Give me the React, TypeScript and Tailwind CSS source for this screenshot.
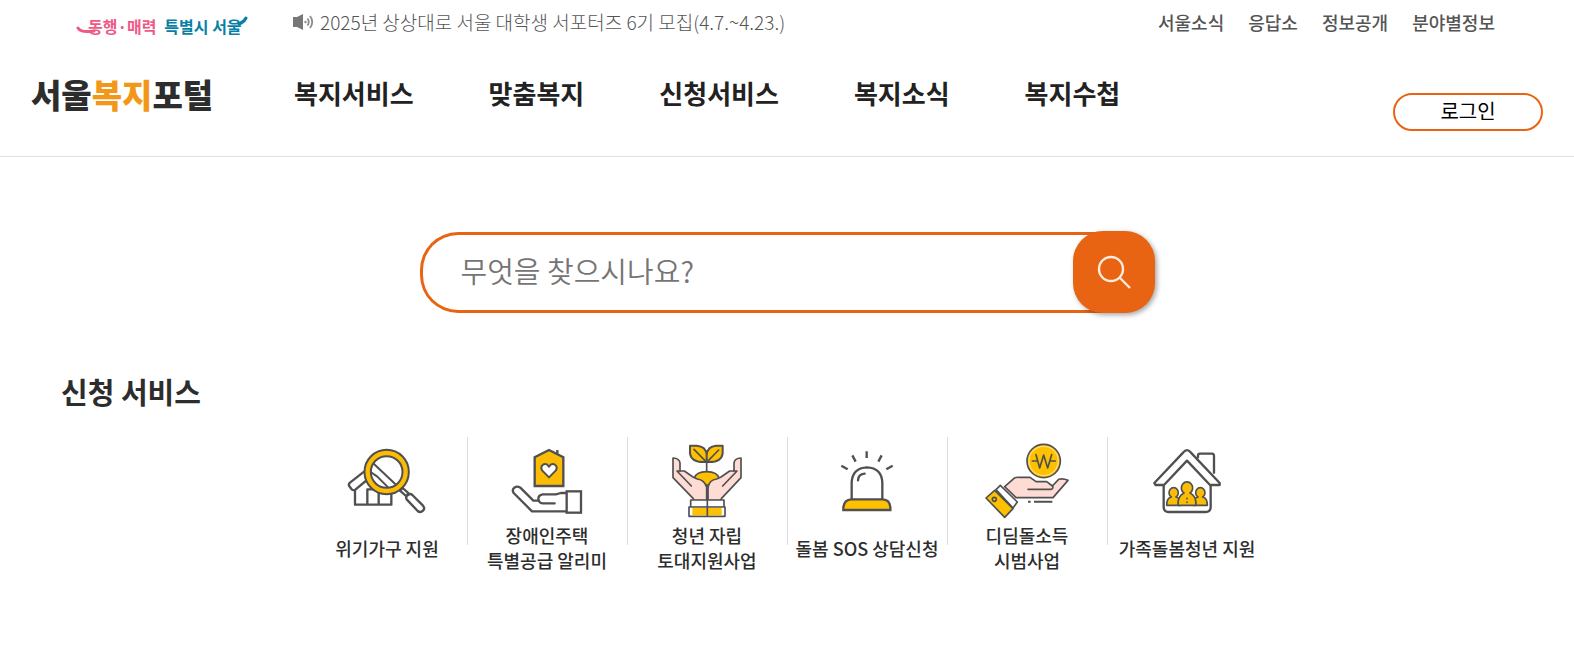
import type { ReactNode } from "react";

const utilityLinks = ["서울소식", "응답소", "정보공개", "분야별정보"];
const menuLinks = ["복지서비스", "맞춤복지", "신청서비스", "복지소식", "복지수첩"];

function Icon({ box, children }: { box: string; children: ReactNode }) {
  return (
    <svg
      viewBox={box}
      className="h-[88px] w-[100px]"
      fill="none"
      stroke="#505050"
      strokeWidth="7"
      strokeLinejoin="round"
      strokeLinecap="round"
      aria-hidden="true"
    >
      {children}
    </svg>
  );
}

function HouseSearchIcon() {
  return (
    <Icon box="51 21 300 264">
      <path d="M105 180V224H214V184M142 222V178H176V222" fill="#fff" />
      <path d="M136 122L90 158Q84 163 88 169L95 178Q101 183 107 178L148 144" fill="#fff" />
      <circle cx="200" cy="126" r="56" fill="#fff" strokeWidth="4" />
      <path d="M158 98L232 168M152 126L172 140L208 176" strokeWidth="6" />
      <circle cx="200" cy="126" r="57" strokeWidth="25" />
      <circle cx="200" cy="126" r="57" stroke="#fbbc05" strokeWidth="13" />
      <path d="M240 182L248 174L266 190L258 198Z" fill="#fff" />
      <path d="M260 208Q256 200 263 196Q270 189 277 195L309 227Q316 235 309 242Q301 250 293 243Z" fill="#fff" />
    </Icon>
  );
}

function HouseHandIcon() {
  return (
    <Icon box="531 21 300 264">
      <path d="M712 76V60" strokeLinecap="butt" />
      <path d="M644 168V82L687 60L730 82V168Z" fill="#fbbc05" strokeLinejoin="miter" />
      <path d="M687 142L667 122Q660 111 669 104Q680 98 687 110Q694 98 705 104Q714 111 707 122Z" fill="#fff" strokeWidth="6" />
      <path d="M738 189H722L708 193H668Q655 195 655 207Q656 219 668 220H704" />
      <path d="M738 244H636L581 189Q575 180 583 173Q592 167 601 173L640 212H656" />
      <rect x="740" y="184" width="43" height="64" strokeLinejoin="miter" fill="#fff" />
    </Icon>
  );
}

function SproutIcon() {
  return (
    <Icon box="111 21 300 264">
      <path d="M260 96V130" strokeWidth="5" />
      <path d="M259 96Q214 99 210 70V47H230Q258 49 260 74V96Q304 99 308 70V47H288Q263 49 260 74" fill="#ffc000" strokeWidth="6" />
      <path d="M258 95L222 58M262 95L296 60" strokeWidth="5" />
      <path d="M222 146Q228 125 260 125Q292 125 298 146L280 165H240Z" fill="#ffc000" strokeWidth="5" />
      <path d="M159 84V143L220 206V212H260V172Q254 150 232 147L219 141L193 123H180V99Q179 85 159 84Z" fill="#ffdbd5" strokeWidth="5" />
      <path d="M363 84V143L304 206V212H264V172Q268 150 290 147L303 141L329 123H342V99Q343 85 363 84Z" fill="#ffdbd5" strokeWidth="5" />
      <path d="M180 123H171L214 168M342 123H351L308 168" strokeWidth="5" />
      <rect x="212" y="210" width="100" height="23" fill="#fff" strokeWidth="5" />
      <rect x="207" y="231" width="108" height="28" fill="#fff" strokeWidth="5" />
      <path d="M217 234H305V256H217Z" fill="#ffc000" stroke="none" />
      <path d="M262 168V258" strokeWidth="5" />
    </Icon>
  );
}

function SirenIcon() {
  return (
    <Icon box="591 21 300 264">
      <path
        d="M740 64V84M697 76L707 95M785 76L775 95M664 107L683 118M818 107L799 118"
        strokeLinecap="butt"
      />
      <path d="M695 208V158Q697 114 741 112Q785 114 787 158V208" />
      <path d="M714 151Q715 132 734 131" />
      <path d="M670 240V231Q673 209 694 208H788Q809 209 811 231V240Z" fill="#ffc000" strokeLinejoin="miter" />
    </Icon>
  );
}

function CoinHandIcon() {
  return (
    <Icon box="111 21 300 264">
      <circle cx="311" cy="93" r="50" fill="#ffc000" strokeWidth="5" />
      <circle cx="311" cy="93" r="44" stroke="#ffdc72" strokeWidth="4" />
      <path d="M288 74L299 114L311 75L323 114L335 74M277 93H291M331 93H346" strokeWidth="5" />
      <path
        d="M194 170L222 145Q230 141 240 142H270L288 155H320L337 168L356 148Q368 144 384 151L339 203H228Z"
        fill="#ffdbd5"
        strokeWidth="5"
      />
      <path d="M264 178H330Q341 178 338 167" strokeWidth="5" />
      <path d="M264 215H272M282 215H337" strokeLinecap="butt" strokeWidth="6" />
      <path d="M168 179L181 166L232 216L219 234Z" fill="#fff" strokeWidth="5" />
      <path d="M138 204L164 181L219 236L194 262Z" fill="#ffc000" strokeWidth="5" />
      <circle cx="163" cy="208" r="6" strokeWidth="5" />
    </Icon>
  );
}

function FamilyHouseIcon() {
  return (
    <Icon box="591 21 300 264">
      <path d="M774 82V77Q774 71 780 71H816Q822 71 822 78V128" />
      <path d="M671 167V231Q671 246 686 246H797Q812 246 812 231V167" fill="#fff" />
      <path
        d="M643 159L730 67Q741 54 752 67L839 159V165H810L741 92L672 165H647Z"
        fill="#fff"
      />
      <g fill="#fbbc05" strokeWidth="5">
        <path d="M680 226Q680 204 694 201A14 15 0 1 1 708 201Q722 204 722 226Z" />
        <path d="M760 226Q760 204 774 201A14 15 0 1 1 788 201Q802 204 802 226Z" />
        <path d="M714 226Q713 197 732 189A17 18 0 1 1 750 189Q769 197 768 226Z" />
      </g>
      <path d="M741 205V206M741 216V217" strokeWidth="5" />
    </Icon>
  );
}

const services = [
  { lines: ["위기가구 지원"], icon: <HouseSearchIcon /> },
  { lines: ["장애인주택", "특별공급 알리미"], icon: <HouseHandIcon /> },
  { lines: ["청년 자립", "토대지원사업"], icon: <SproutIcon /> },
  { lines: ["돌봄 SOS 상담신청"], icon: <SirenIcon /> },
  { lines: ["디딤돌소득", "시범사업"], icon: <CoinHandIcon /> },
  { lines: ["가족돌봄청년 지원"], icon: <FamilyHouseIcon /> },
];

function TopBar() {
  return (
    <div className="flex h-11 items-center pr-[79px] pl-[76px] text-lg leading-6 text-[#555]">
      <a href="#seoul" className="relative flex h-8 w-[216px] items-center gap-2 pt-2 text-base font-bold">
        <svg
          viewBox="0 0 172 32"
          className="absolute top-0 left-0 h-8 w-[172px]"
          fill="none"
          strokeLinecap="round"
          aria-hidden="true"
        >
          <path d="M2 22Q5 27 18 25" stroke="#ee5a86" strokeWidth="3" />
          <path d="M163 18Q168 16 170 12" stroke="#0a7fa6" strokeWidth="3" />
        </svg>
        <span className="pl-3 text-[#ee5a86]">동행·매력</span>
        <span className="text-[#0a7fa6]">특별시 서울</span>
      </a>
      <a href="#notice" className="flex items-center gap-[6px] text-[19px] font-light">
        <svg viewBox="0 0 22 16" className="h-4 w-[22px]" fill="none" stroke="#8a8a8a" aria-hidden="true">
          <path d="M1 3H5L11 0V16L5 13H1Z" fill="#777" stroke="none" />
          <circle cx="13.5" cy="8" r="1.2" fill="#8a8a8a" stroke="none" />
          <path d="M15.5 4.5Q18 8 15.5 11.5M18 2Q22.5 8 18 14" strokeWidth="1.8" />
        </svg>
        2025년 상상대로 서울 대학생 서포터즈 6기 모집(4.7.~4.23.)
      </a>
      <ul className="ml-auto flex gap-6 font-medium">
        {utilityLinks.map((name) => (
          <li key={name}>
            <a href="#utility">{name}</a>
          </li>
        ))}
      </ul>
    </div>
  );
}

function Header() {
  return (
    <header className="border-b border-[#e0e0e0]">
      <TopBar />
      <div className="flex h-28 items-start px-[31px]">
        <a href="#home" className="mt-7 w-[263px] text-[33px] leading-[44px] font-black text-[#2d2d2d]">
          서울<span className="text-[#f39719]">복지</span>포털
        </a>
        <nav className="mt-[31px]">
          <ul className="flex gap-[75px] text-[26px] leading-9 font-bold text-[#222]">
            {menuLinks.map((name) => (
              <li key={name}>
                <a href="#menu">{name}</a>
              </li>
            ))}
          </ul>
        </nav>
        <button
          type="button"
          className="mt-[49px] ml-auto flex h-[38px] w-[150px] items-center justify-center rounded-full border-2 border-[#e86412] pb-0.5 text-xl leading-6 text-black"
        >
          로그인
        </button>
      </div>
    </header>
  );
}

function SearchForm() {
  return (
    <form
      className="mx-auto mt-[74px] flex w-[735px] items-center"
      onSubmit={(event) => event.preventDefault()}
    >
      <input
        type="search"
        aria-label="검색어"
        placeholder="무엇을 찾으시나요?"
        className="-mr-10 h-[81px] min-w-0 flex-1 rounded-l-[38px] border-[3px] border-r-0 border-[#e86412] pr-12 pb-1 pl-[38px] text-[29px] font-[350] outline-none placeholder:text-[#757575]"
      />
      <button
        type="submit"
        aria-label="검색"
        className="relative flex size-[82px] items-center justify-center rounded-[30px] bg-[#e86412] shadow-[2px_2px_5px_rgba(0,0,0,0.35)]"
      >
        <svg viewBox="0 0 34 34" className="size-[34px]" fill="none" stroke="#ffeadb" strokeWidth="2.4" aria-hidden="true">
          <circle cx="14" cy="14" r="12" />
          <path d="M22.5 22.5L33 33" />
        </svg>
      </button>
    </form>
  );
}

export default function App() {
  return (
    <div className="min-h-screen bg-white font-['Noto_Sans_CJK_KR',sans-serif] whitespace-nowrap text-[#2d2d2d]">
      <Header />
      <main className="pb-[72px]">
        <SearchForm />
        <section className="mt-[58px]">
          <h2 className="pl-[61px] text-[29px] leading-10 font-bold">신청 서비스</h2>
          <ul className="mt-[26px] flex justify-center text-lg leading-[25px] font-medium">
            {services.map((service, index) => (
              <li key={service.lines[0]} className="flex w-40">
                {index > 0 && <span className="-mr-px h-[108px] w-px bg-[#ddd]" />}
                <a href="#service" className="flex flex-1 flex-col items-center text-center">
                  {service.icon}
                  <span className="-mt-0.5 flex h-[50px] flex-col justify-center">
                    {service.lines.map((line) => (
                      <span key={line}>{line}</span>
                    ))}
                  </span>
                </a>
              </li>
            ))}
          </ul>
        </section>
      </main>
    </div>
  );
}
